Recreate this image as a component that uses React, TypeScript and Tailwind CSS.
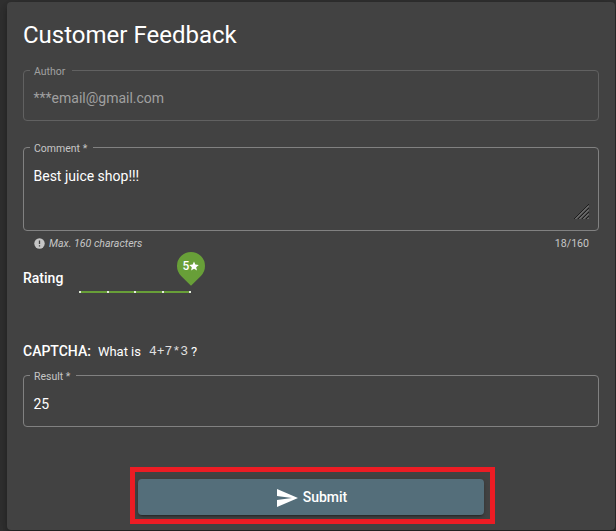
import type { ReactNode } from 'react';

type FieldProps = {
  label: string;
  className: string;
  labelClass: string;
  children: ReactNode;
};

function OutlinedField({ label, className, labelClass, children }: FieldProps) {
  return (
    <div className={`relative rounded border px-[9.5px] text-sm leading-5 ${className}`}>
      <span className={`absolute -top-[5px] left-[6px] bg-[#424242] pl-1 text-[10.5px] leading-3 whitespace-nowrap ${labelClass}`}>
        {label}
      </span>
      {children}
    </div>
  );
}

function ResizeGrip() {
  return (
    <svg className="absolute right-[9px] bottom-[11px]" width="15" height="15" viewBox="0 0 15 15" fill="none">
      <path d="M0 15 15 0M4 15 15 4M8 15 15 8M12 15 15 12" stroke="#1c1c1c" />
      <path d="M1.500 15 15 1.500M5.500 15 15 5.500M9.500 15 15 9.500M13.500 15 15 13.500" stroke="#a0a0a0" strokeWidth=".8" />
    </svg>
  );
}

function RatingSlider() {
  return (
    <div className="relative ml-4 mt-[27px] flex h-[2px] w-28 justify-between bg-[#689f38]">
      {[1, 2, 3, 4, 5].map((n) => (
        <span key={n} className="size-[2px] bg-[#e4eddc]" />
      ))}
      <div className="absolute -top-[39px] left-[98px] size-7">
        <div className="absolute inset-0 rotate-45 rounded-full rounded-br-none bg-[#689f38]" />
        <div className="absolute inset-0 flex items-center justify-center text-xs font-medium text-white">
          5
          <svg width="10" height="10" viewBox="0 0 24 24" fill="currentColor">
            <path d="m12 1 3.2 7.6 8.3.7-6.3 5.4 1.9 8.1-7.1-4.3-7.1 4.3 1.9-8.1L.5 9.300l8.300-.7z" />
          </svg>
        </div>
      </div>
    </div>
  );
}

export default function App() {
  return (
    <div className="h-[531px] w-[616px] overflow-hidden bg-[#303030] pt-[2px] pl-[7px] font-['Roboto',sans-serif] text-white">
      <main className="flex h-[528px] w-[608px] flex-col rounded bg-[#424242] px-4 shadow-[0_3px_5px_-1px_rgba(0,0,0,.2),0_6px_10px_rgba(0,0,0,.14),0_1px_18px_rgba(0,0,0,.12)]">
        <h1 className="mt-[17px] h-[51px] text-2xl leading-8">Customer Feedback</h1>

        <OutlinedField
          label="Author"
          className="h-[51px] border-[#616161] pt-[17px] text-[#a0a0a0]"
          labelClass="w-[42px] text-[#a0a0a0]"
        >
          ***email@gmail.com
        </OutlinedField>

        <OutlinedField
          label="Comment *"
          className="mt-[26px] h-[84px] border-[#818181] pt-[18px]"
          labelClass="w-[63px] text-[#c6c6c6]"
        >
          Best juice shop!!!
          <ResizeGrip />
        </OutlinedField>

        <div className="mt-[5px] flex h-4 items-center justify-between px-[10px] text-[10.6px] text-[#c6c6c6]">
          <span className="flex items-center gap-1 pl-[1px] italic">
            <svg className="-mt-[1px]" width="11" height="11" viewBox="0 0 11 11">
              <circle cx="5.5" cy="5.5" r="5.2" fill="#c6c6c6" />
              <path d="M5.500 2.500v3.500M5.500 7.200v1.300" stroke="#424242" strokeWidth="1.300" />
            </svg>
            Max. 160 characters
          </span>
          <span>18/160</span>
        </div>

        <div className="mt-3 flex h-[77px] items-start">
          <span className="mt-1 w-10 text-sm leading-5 font-medium">Rating</span>
          <RatingSlider />
        </div>

        <div className="flex h-[34px] text-[13px] leading-5">
          <span className="text-sm leading-5 font-medium">CAPTCHA:</span>
          <span className="mt-[1px] ml-[7px]">What is</span>
          <code className="mt-[1px] ml-2 font-['Liberation_Mono',monospace] text-[13px] text-[#e0e0e0]">4+7*3</code>
          <span className="mt-[1px] ml-[3px]">?</span>
        </div>

        <OutlinedField
          label="Result *"
          className="h-[52px] border-[#818181] pt-[18px]"
          labelClass="w-[46px] text-[#c6c6c6]"
        >
          25
        </OutlinedField>

        <div className="mt-10 ml-[107px] h-[57px] w-[365px] border-[5px] border-[#ed1c24] pt-[7px] pl-[3px]">
          <button className="flex h-9 w-[346px] items-center justify-center gap-1 rounded bg-[#546e7a] text-sm font-medium shadow-[0_3px_1px_-2px_rgba(0,0,0,.2),0_2px_2px_rgba(0,0,0,.14),0_1px_5px_rgba(0,0,0,.12)]">
            <svg className="mt-[2px]" width="24" height="24" viewBox="0 0 24 24" fill="currentColor">
              <path d="M2.010 21 23 12 2.010 3 2 10l15 2-15 2z" />
            </svg>
            Submit
          </button>
        </div>
      </main>
    </div>
  );
}
